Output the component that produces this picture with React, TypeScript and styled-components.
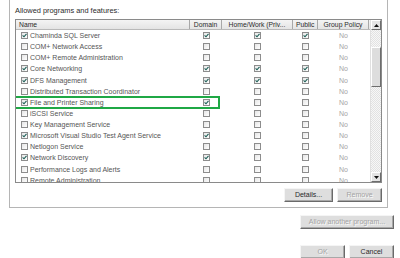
import React from "react";
import styled, { createGlobalStyle } from "styled-components";

const GlobalStyle = createGlobalStyle`
  html, body {
    margin: 0;
    padding: 0;
    background: #ffffff;
  }
  body {
    font-family: "Liberation Sans", Arial, sans-serif;
    font-size: 7px;
    color: #333;
  }
`;

const Page = styled.div`
  width: 400px;
  height: 258px;
  padding-left: 9px;
  box-sizing: border-box;
  overflow: hidden;
`;

const GroupBox = styled.div`
  width: 379px;
  box-sizing: border-box;
  border: 1px solid #b5b5b5;
  border-top: none;
  padding: 4px 5px 5px 5px;
`;

const Caption = styled.div`
  height: 15px;
  line-height: 13px;
  font-size: 7.4px;
  color: #2a2a2a;
`;

const ListBox = styled.div`
  width: 367px;
  height: 164px;
  box-sizing: border-box;
  border: 1px solid #8a8a8a;
  display: flex;
  overflow: hidden;
  background: #fff;
`;

const ListBody = styled.div`
  flex: 1;
  overflow: hidden;
`;

const cols = "174px 32px 71px 25px 51px 1px";

const HeaderRow = styled.div`
  display: grid;
  grid-template-columns: ${cols};
  height: 10px;
  background: linear-gradient(#f4f4f4, #e4e4e4);
  border-bottom: 1px solid #b9b9b9;
  box-sizing: border-box;
`;

const HeaderCell = styled.div<{ $align?: string }>`
  line-height: 9px;
  font-size: 6.8px;
  color: #2b2b2b;
  border-right: 1px solid #a8a8a8;
  padding: 0 3px;
  text-align: ${(p) => p.$align || "center"};
  white-space: nowrap;
  overflow: hidden;
`;

const Row = styled.div`
  display: grid;
  grid-template-columns: ${cols};
  height: 11.13px;
  align-items: center;
`;

const NameCell = styled.div`
  display: flex;
  align-items: center;
  gap: 2px;
  padding-left: 5px;
  color: #555;
  font-size: 7px;
  white-space: nowrap;
  line-height: 11px;
`;

const CenterCell = styled.div<{ $muted?: boolean }>`
  display: flex;
  justify-content: center;
  align-items: center;
  color: ${(p) => (p.$muted ? "#a5a5a5" : "#555")};
  font-size: 7px;
  line-height: 11px;
`;

const Box = styled.span`
  width: 7px;
  height: 7px;
  box-sizing: border-box;
  border: 1px solid #8d8d8d;
  background: linear-gradient(135deg, #e6e6e6, #ffffff);
  display: inline-flex;
  align-items: center;
  justify-content: center;
  flex: none;
`;

const ScrollBar = styled.div`
  width: 11px;
  display: flex;
  flex-direction: column;
  border-left: 1px solid #e0e0e0;
  box-sizing: border-box;
`;

const Arrow = styled.div`
  height: 10px;
  flex: none;
  box-sizing: border-box;
  background: #e4e4e4;
  border-top: 1px solid #fff;
  border-left: 1px solid #fff;
  border-right: 1px solid #6d6d6d;
  border-bottom: 1px solid #6d6d6d;
  display: flex;
  align-items: center;
  justify-content: center;
`;

const Track = styled.div`
  flex: 1;
  display: flex;
  flex-direction: column;
  background-color: #f0f0f0;
  background-image: repeating-conic-gradient(#e2e2e2 0% 25%, #f7f7f7 0% 50%);
  background-size: 2px 2px;
  padding-top: 17px;
`;

const Thumb = styled.div`
  height: 40px;
  box-sizing: border-box;
  background: #dddddd;
  border-top: 1px solid #fff;
  border-left: 1px solid #fff;
  border-right: 1px solid #6d6d6d;
  border-bottom: 1px solid #6d6d6d;
`;

const ButtonRow = styled.div<{ $pad?: number; $top?: number }>`
  display: flex;
  justify-content: flex-end;
  gap: 4px;
  margin-top: ${(p) => p.$top ?? 0}px;
  padding-right: ${(p) => p.$pad ?? 0}px;
`;

const Button = styled.div<{ $w: number; $disabled?: boolean }>`
  width: ${(p) => p.$w}px;
  height: 14px;
  box-sizing: border-box;
  background: #dedede;
  border-top: 1px solid #f5f5f5;
  border-left: 1px solid #f5f5f5;
  border-right: 1px solid #6a6a6a;
  border-bottom: 1px solid #6a6a6a;
  box-shadow: inset -1px -1px 0 #a8a8a8;
  font-size: 7px;
  line-height: 12px;
  text-align: center;
  color: ${(p) => (p.$disabled ? "#a3a3a3" : "#2a2a2a")};
  text-shadow: ${(p) => (p.$disabled ? "1px 1px 0 #fafafa" : "none")};
  white-space: nowrap;
`;

const Highlight = styled.div`
  position: absolute;
  left: -2px;
  top: -1px;
  width: 206px;
  height: 13px;
  box-sizing: border-box;
  border: 2px solid #1fa845;
  pointer-events: none;
`;

const RowWrap = styled.div`
  position: relative;
`;

const Check = () => (
  <svg width="5" height="5" viewBox="0 0 5 5">
    <path d="M0.6 2.4 L2 3.8 L4.5 0.8" fill="none" stroke="#1d5f57" strokeWidth="1.1" />
  </svg>
);

const CheckBox = ({ on }: { on: boolean }) => <Box>{on && <Check />}</Box>;

type Item = { name: string; on: boolean; d: boolean; h: boolean; p: boolean; mark?: boolean };

const items: Item[] = [
  { name: "Chaminda SQL Server", on: true, d: true, h: true, p: true },
  { name: "COM+ Network Access", on: false, d: false, h: false, p: false },
  { name: "COM+ Remote Administration", on: false, d: false, h: false, p: false },
  { name: "Core Networking", on: true, d: true, h: true, p: true },
  { name: "DFS Management", on: true, d: true, h: true, p: true },
  { name: "Distributed Transaction Coordinator", on: false, d: false, h: false, p: false },
  { name: "File and Printer Sharing", on: true, d: true, h: false, p: false, mark: true },
  { name: "iSCSI Service", on: false, d: false, h: false, p: false },
  { name: "Key Management Service", on: false, d: false, h: false, p: false },
  { name: "Microsoft Visual Studio Test Agent Service", on: true, d: true, h: false, p: false },
  { name: "Netlogon Service", on: false, d: false, h: false, p: false },
  { name: "Network Discovery", on: true, d: true, h: false, p: false },
  { name: "Performance Logs and Alerts", on: false, d: false, h: false, p: false },
  { name: "Remote Administration", on: false, d: false, h: false, p: false },
];

const UpGlyph = () => (
  <svg width="5" height="3" viewBox="0 0 5 3">
    <path d="M0 3 L2.5 0 L5 3 Z" fill="#111" />
  </svg>
);

const DownGlyph = () => (
  <svg width="5" height="3" viewBox="0 0 5 3">
    <path d="M0 0 L2.5 3 L5 0 Z" fill="#111" />
  </svg>
);

export default function App() {
  return (
    <Page>
      <GlobalStyle />
      <GroupBox>
        <Caption>Allowed programs and features:</Caption>
        <ListBox>
          <ListBody>
            <HeaderRow>
              <HeaderCell $align="left">Name</HeaderCell>
              <HeaderCell>Domain</HeaderCell>
              <HeaderCell>Home/Work (Priv...</HeaderCell>
              <HeaderCell>Public</HeaderCell>
              <HeaderCell>Group Policy</HeaderCell>
              <HeaderCell />
            </HeaderRow>
            {items.map((it) => (
              <RowWrap key={it.name}>
                <Row>
                  <NameCell>
                    <CheckBox on={it.on} />
                    {it.name}
                  </NameCell>
                  <CenterCell>
                    <CheckBox on={it.d} />
                  </CenterCell>
                  <CenterCell>
                    <CheckBox on={it.h} />
                  </CenterCell>
                  <CenterCell>
                    <CheckBox on={it.p} />
                  </CenterCell>
                  <CenterCell $muted>No</CenterCell>
                  <div />
                </Row>
                {it.mark && <Highlight />}
              </RowWrap>
            ))}
          </ListBody>
          <ScrollBar>
            <Arrow>
              <UpGlyph />
            </Arrow>
            <Track>
              <Thumb />
            </Track>
            <Arrow>
              <DownGlyph />
            </Arrow>
          </ScrollBar>
        </ListBox>
        <ButtonRow $top={5}>
          <Button $w={49}>Details...</Button>
          <Button $w={45} $disabled>
            Remove
          </Button>
        </ButtonRow>
      </GroupBox>
      <ButtonRow $top={7} $pad={6}>
        <Button $w={94} $disabled>
          Allow another program...
        </Button>
      </ButtonRow>
      <ButtonRow $top={16} $pad={6}>
        <Button $w={45} $disabled>
          OK
        </Button>
        <Button $w={45}>Cancel</Button>
      </ButtonRow>
    </Page>
  );
}
